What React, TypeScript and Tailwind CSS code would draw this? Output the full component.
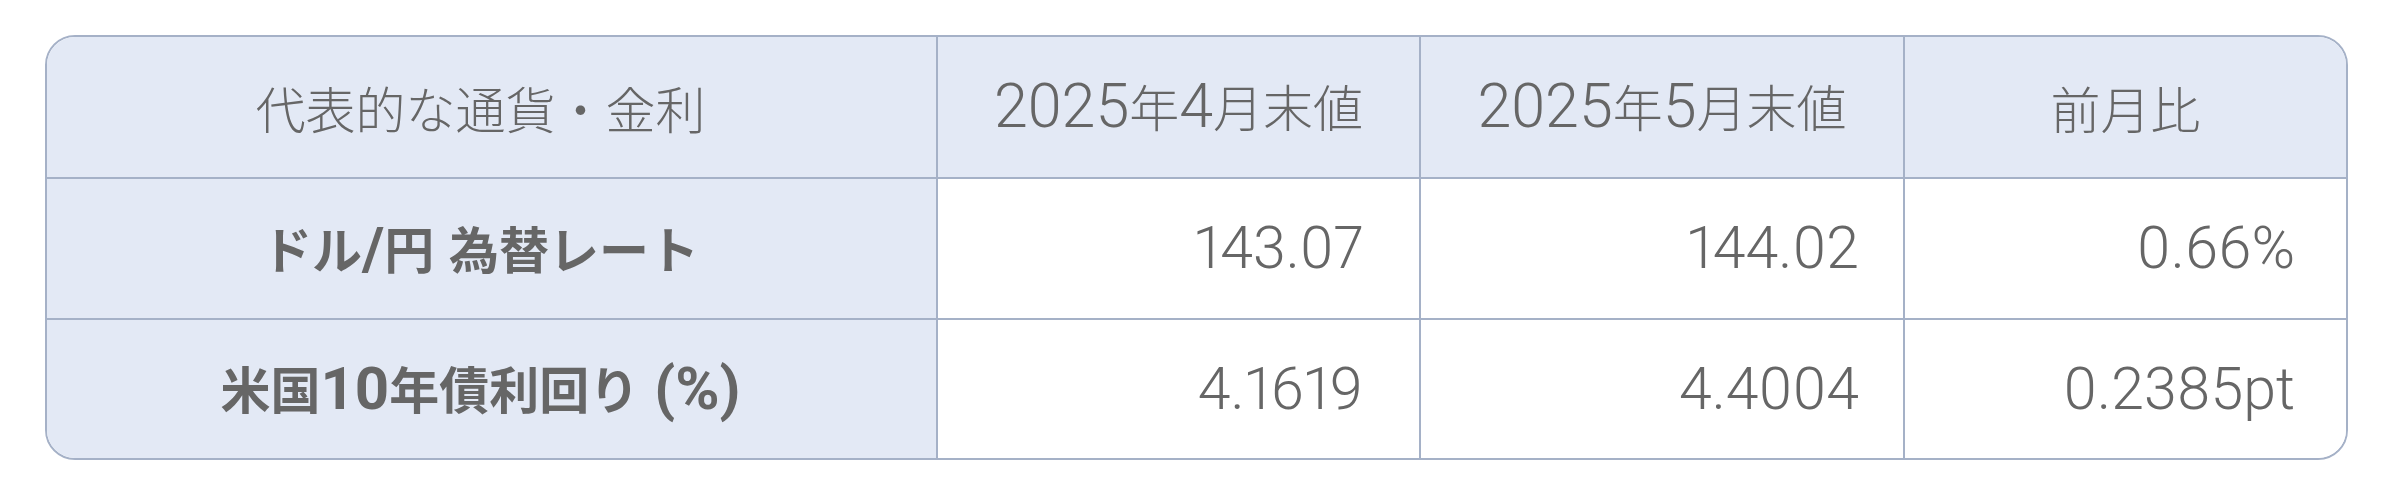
import React from 'react';

const rows = [
  { label: 'ドル/円 為替レート', apr: '143.07', may: '144.02', diff: '0.66%' },
  { label: '米国10年債利回り (%)', apr: '4.1619', may: '4.4004', diff: '0.2385pt' },
];

const latin = { fontFamily: 'Roboto, "Noto Sans CJK JP", sans-serif' };
const cjk = { fontFamily: '"Noto Sans CJK JP", sans-serif' };

// Split a string into CJK and Latin runs so each can get its own font/size
function Mixed({ text, bold }: { text: string; bold?: boolean }) {
  const parts = text.split(/([\u3000-\u9fff\uff00-\uffef]+)/).filter(Boolean);
  return (
    <span className="whitespace-pre">
      {parts.map((p, i) =>
        /[\u3000-\u9fff\uff00-\uffef]/.test(p) ? (
          <span key={i} style={cjk} className={bold ? 'text-[50px] font-bold' : 'text-[50px] font-light'}>
            {p}
          </span>
        ) : (
          <span key={i} style={latin} className={bold ? 'text-[60px] font-bold' : 'text-[61px] font-light'}>
            {p}
          </span>
        )
      )}
    </span>
  );
}

export default function App() {
  return (
    <div className="w-[2400px] h-[501px] bg-white pt-[35px] pl-[45px]" style={latin}>
      <div className="w-[2303px] border-2 border-[#a5b1c7] rounded-[30px] overflow-hidden text-[#666666]">
        {/* Header */}
        <div className="grid grid-cols-[891px_483px_484px_441px] h-[142px] bg-[#e3e9f5] border-b-2 border-[#a5b1c7]">
          <div className="flex items-center justify-center pr-[22px] border-r-2 border-[#a5b1c7]">
            <Mixed text="代表的な通貨・金利" />
          </div>
          <div className="flex items-center justify-center border-r-2 border-[#a5b1c7]">
            <Mixed text="2025年4月末値" />
          </div>
          <div className="flex items-center justify-center border-r-2 border-[#a5b1c7]">
            <Mixed text="2025年5月末値" />
          </div>
          <div className="flex items-center justify-center">
            <Mixed text="前月比" />
          </div>
        </div>

        {/* Body rows */}
        {rows.map((row, i) => (
          <div
            key={row.label}
            className={
              i === 0
                ? 'grid grid-cols-[891px_483px_484px_441px] h-[141px] border-b-2 border-[#a5b1c7]'
                : 'grid grid-cols-[891px_483px_484px_441px] h-[138px]'
            }
          >
            <div className="flex items-center justify-center pr-[22px] bg-[#e3e9f5] border-r-2 border-[#a5b1c7]">
              <Mixed text={row.label} bold />
            </div>
            <div className="flex items-center justify-end pr-[56px] bg-white border-r-2 border-[#a5b1c7] text-[59px] font-light proportional-nums">
              {row.apr}
            </div>
            <div className="flex items-center justify-end pr-[44px] bg-white border-r-2 border-[#a5b1c7] text-[59px] font-light proportional-nums">
              {row.may}
            </div>
            <div className="flex items-center justify-end pr-[51px] bg-white text-[59px] font-light proportional-nums">
              {row.diff}
            </div>
          </div>
        ))}
      </div>
    </div>
  );
}
